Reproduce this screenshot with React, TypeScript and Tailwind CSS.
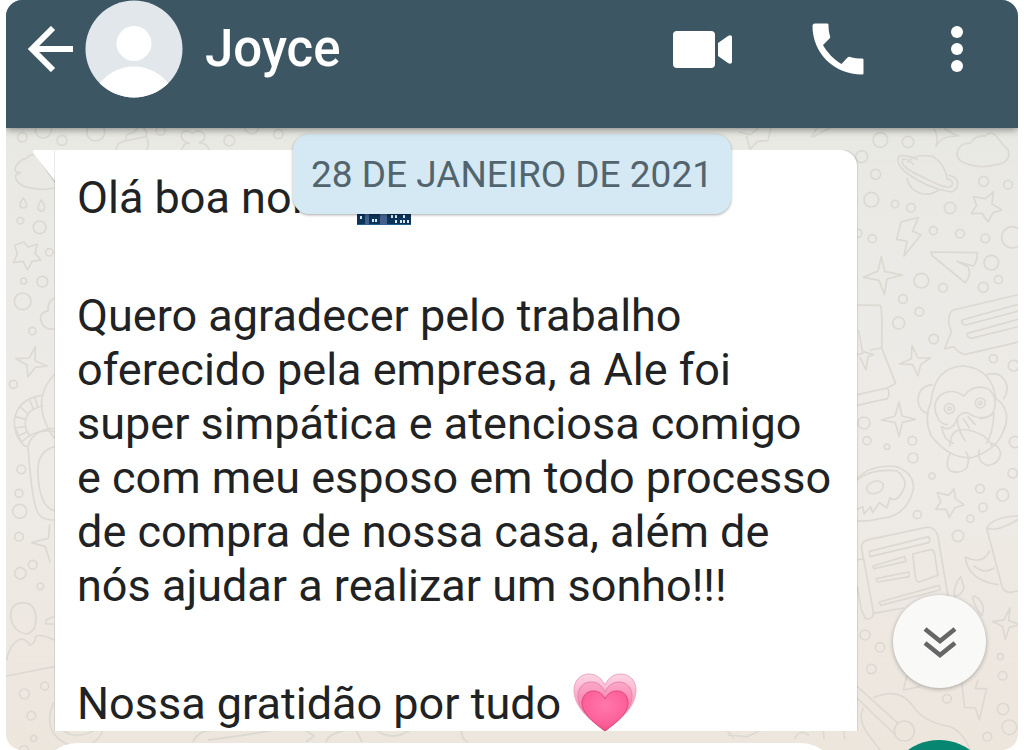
import type { ReactNode } from "react";

type Circle = [number, number, number];

const rightDots: Circle[] = [
  [91, 60, 22], [174, 66, 17], [35, 110, 18], [77, 163, 15], [64, 239, 22], [135, 252, 11],
  [183, 263, 13], [300, 264, 17], [401, 184, 15], [474, 194, 13], [250, 332, 12], [330, 341, 13],
  [67, 356, 12], [406, 355, 13], [487, 352, 32], [424, 428, 22], [445, 479, 12], [400, 502, 15],
  [214, 482, 22], [279, 503, 13], [159, 537, 13], [208, 575, 13], [146, 609, 18], [251, 657, 14],
  [430, 716, 12], [491, 737, 16], [42, 909, 18], [51, 962, 12], [111, 980, 8], [187, 962, 13],
  [189, 1014, 15], [495, 966, 17], [246, 1068, 9], [488, 1060, 14], [390, 1106, 13], [458, 1125, 18],
  [399, 1162, 13], [361, 1196, 11], [202, 1184, 12], [324, 1248, 17], [45, 1545, 15], [90, 1582, 14],
  [64, 1647, 14], [451, 1610, 9], [458, 1667, 13], [291, 1736, 13], [459, 1767, 17], [478, 1822, 22],
  [412, 1850, 13], [24, 340, 12],
];

const leftDots: Circle[] = [
  [67, 52, 14], [130, 30, 24], [186, 61, 15], [287, 36, 27], [482, 32, 13], [688, 62, 16],
  [755, 20, 21], [835, 42, 14], [61, 302, 10], [119, 322, 19], [148, 397, 11], [71, 483, 9],
  [127, 485, 16], [68, 544, 25], [97, 633, 11], [40, 793, 12], [64, 1048, 13], [57, 1120, 12],
  [59, 1174, 21], [57, 1250, 13], [98, 1334, 13], [61, 1360, 17], [121, 1399, 10], [73, 1722, 15],
  [134, 1698, 12], [94, 1787, 13], [101, 1855, 9], [72, 1890, 13],
];

function Doodles({ dots, children }: { dots: Circle[]; children: ReactNode }) {
  return (
    <g
      transform="scale(.33333)"
      fill="none"
      stroke="#dcd9d3"
      strokeWidth="5"
      strokeLinejoin="round"
      strokeLinecap="round"
    >
      {dots.map(([x, y, r]) => (
        <circle key={`${x}-${y}`} cx={x} cy={y} r={r} />
      ))}
      {children}
    </g>
  );
}

function Wallpaper() {
  return (
    <div className="absolute inset-0 overflow-hidden bg-linear-to-b from-[#e9e9e4] via-[#eeebe7] via-50% to-[#ede6dd]" aria-hidden="true">
      <svg className="absolute top-0 left-0" width="294" height="622" viewBox="6 8 294 622">
        <Doodles dots={leftDots}>
          <path d="M62 158 Q38 158 48 138 Q62 116 78 116 Q100 92 120 116 Q134 138 162 150 M162 204 Q128 212 98 205 Q54 200 46 172 Q46 162 62 158" />
          <path d="M70 234 Q50 262 70 264 Q90 262 70 234 M124 240 Q104 270 124 274 Q144 268 124 240" />
          <path d="M72 366 L85 382 L112 372 L105 400 L123 420 L96 424 L83 450 L69 424 L40 428 L52 402 L44 376 Z" />
          <path d="M162 535 Q140 548 145 572 Q114 580 124 605 Q132 630 162 627" />
          <path d="M106 680 L105 722 L142 738 L106 742 L84 771 L81 735 L48 716 L88 714 Z" />
          <path d="M162 765 Q110 820 130 890 Q144 932 162 952 M124 826 Q52 838 43 900 Q42 946 66 968 M128 858 Q78 868 76 908 Q76 938 90 944 M88 838 L100 866 M62 862 L84 882 M46 890 L76 898 M46 924 L78 920 M104 830 L113 860 M54 948 L84 934" />
          <path d="M66 965 Q105 925 162 935 M50 930 Q62 980 84 980 Q96 930 160 925 M84 980 Q96 1160 118 1185 Q132 1200 162 1200 M162 980 Q110 996 114 1060 Q118 1160 162 1172" />
          <path d="M149 1215 L145 1255 L95 1268 L136 1280 L150 1325" />
          <path d="M70 1448 Q32 1448 32 1488 Q36 1534 80 1542 Q108 1536 108 1495 Q106 1450 70 1448 M160 1490 L138 1500 L138 1512 L160 1512" />
          <path d="M20 1668 L162 1640 M20 1620 Q30 1570 60 1558 Q76 1555 90 1576 Q108 1568 106 1550 Q120 1540 162 1560" />
          <path d="M160 1750 Q138 1800 160 1840 Q200 1890 260 1876 Q300 1865 310 1825 M168 1810 Q210 1870 285 1830" />
          <path d="M350 90 Q345 68 380 62 Q370 42 400 38 Q418 24 408 16 Q446 24 438 48 Q450 70 440 90 M380 62 L438 50" />
          <path d="M545 90 Q552 66 568 70 Q536 58 546 38 Q560 26 578 40 Q594 24 612 42 Q620 62 598 68 Q622 70 628 90" />
        </Doodles>
      </svg>
      <svg className="absolute top-0 right-0" width="298" height="622" viewBox="-130 8 298 622">
        <Doodles dots={rightDots}>
          <path d="M-332 36 L-300 44 L-276 26 M-238 26 L-246 62 L-278 64 L-300 88 L-310 50 M-115 50 L-98 22 M-110 50 L-60 24" />
          <path d="M252 28 Q266 44 258 80 Q272 46 325 48 Q292 34 285 26" />
          <path d="M358 134 Q316 122 322 96 Q330 68 360 70 Q376 44 406 48 Q424 28 442 52 Q460 78 474 88 Q486 128 438 134 Q396 146 358 134 Z" />
          <path d="M174 126 Q196 98 250 110 Q288 136 292 180 M264 212 Q228 232 198 214 Q174 198 172 176 M148 108 Q134 126 166 156 Q230 206 306 216 Q328 204 322 182 Q316 170 298 166 M148 108 Q168 104 202 118 M158 118 Q146 140 220 172 Q280 206 304 200 Q314 184 294 176 M158 118 Q178 116 190 134" />
          <path d="M430 216 L426 252 L456 270 L429 278 L414 306 L396 280 L364 280 L380 256 L370 230 L406 236 Z" />
          <path d="M153 306 L205 292 L188 334 L213 344 L162 408 L171 364 L140 358 Z" />
          <path d="M242 396 L382 398 Q380 430 370 438 L320 424 L354 440 Q366 466 345 488 L248 408 Z" />
          <path d="M94 410 L104 454 L157 465 L111 477 L103 523 L87 481 L41 472 L84 453 Z" />
          <path d="M22 555 L90 556 Q98 566 95 684 L137 790 L112 804 L22 824 M112 804 Q122 820 112 836 L22 856 M26 632 L38 700 L22 704 M38 694 L70 704 L54 710 L48 750 L30 712 M62 690 L95 684" />
          <path d="M505 524 L310 570 Q295 576 296 610 L304 636 L284 686 L312 680 Q326 700 346 703 L505 666 M505 553 L336 600 Q332 612 348 615 L505 573 M505 598 L352 640 Q350 652 364 655 L505 620" />
          <path d="M186 676 L204 714 L241 714 L212 734 L204 768 L188 734 L149 732 L184 716 Z" />
          <path d="M147 846 L156 888 L196 898 L157 907 L147 950 L136 908 L94 900 L135 888 Z" />
          <path d="M243 846 Q252 742 340 738 Q424 744 438 836 Q486 870 462 930 M246 794 Q206 800 204 840 Q206 874 236 882 M410 764 Q448 752 466 784 Q480 812 460 836 M341 828 Q372 790 414 806 Q444 830 432 870 Q424 894 392 896 M341 828 Q306 802 270 826 Q244 854 262 890 Q270 912 292 914 M243 846 Q220 898 244 948 Q300 1020 370 1012 Q450 984 464 920" />
          <path d="M275 920 Q305 940 322 894 Q338 872 356 880 Q394 906 432 880 M322 894 Q322 930 346 962 M340 896 L358 924 M354 890 L376 914 M432 880 Q430 934 410 970 M275 920 Q280 960 310 970" />
          <circle cx="298" cy="866" r="15" /><circle cx="391" cy="849" r="15" />
          <circle cx="298" cy="866" r="5" /><circle cx="391" cy="849" r="5" />
          <path d="M300 978 Q300 920 352 930 Q408 940 426 978 M300 1000 Q282 1042 304 1054 Q330 1062 350 1044 Q362 1014 348 996 M388 990 Q380 1026 412 1036 Q446 1034 452 1002 Q448 978 426 970" />
          <path d="M22 1075 Q64 1032 140 1040 Q194 1060 190 1108 Q170 1190 90 1196 Q52 1206 22 1202 M22 1080 Q60 1046 140 1052 Q176 1080 160 1110 Q140 1150 120 1134 L110 1164 L88 1148 L68 1178 L62 1160 L42 1182 L38 1160 L22 1168" />
          <ellipse cx="75" cy="1102" rx="26" ry="18" transform="rotate(-20 75 1102)" />
          <path d="M312 1106 L316 1136 L342 1154 L314 1164 L298 1192 L288 1168 L257 1168 L272 1146 L262 1118 L296 1126 Z" />
          <path d="M34 1280 Q36 1262 60 1258 L230 1222 Q256 1220 264 1250 L294 1430 M34 1280 L70 1475 Q72 1500 46 1496 L34 1470 L22 1400 M22 1320 L40 1316 M70 1480 L160 1464 M58 1294 L236 1250 Q242 1260 236 1268 L60 1310 Z M68 1338 L164 1310 L168 1324 L72 1346 Z M78 1376 L176 1356 L178 1370 L82 1386 Z M88 1446 L268 1396 L270 1410 L92 1456 Z M188 1302 L244 1288 Q252 1290 254 1302 L264 1366 L208 1386 Q198 1386 196 1370 Z" />
          <path d="M410 1224 Q430 1190 505 1188 M410 1224 Q440 1238 505 1198 M410 1224 L456 1400 Q464 1418 482 1417 L505 1412 M418 1294 Q398 1336 346 1312 Q354 1380 444 1394 M432 1344 Q404 1364 372 1338" />
          <path d="M332 1370 Q308 1400 314 1430 Q338 1426 342 1400 Z M368 1430 Q372 1460 396 1486 Q410 1450 374 1428" />
          <path d="M480 1464 L476 1502 L512 1514 L478 1522 L466 1558 L458 1520 L428 1504 L462 1500 Z" />
          <path d="M334 1680 L344 1762 L376 1764 L388 1800 L410 1706 L376 1706 L384 1680 M170 1670 L160 1710 L210 1700" />
          <path d="M22 1700 L142 1808 M22 1735 L136 1845 M72 1732 Q150 1700 190 1760 Q220 1806 300 1820 Q340 1835 360 1890 M40 1765 Q20 1800 60 1850 L90 1890" />
          <circle cx="163" cy="1833" r="30" />
          <path d="M-365 1845 L-310 1850 L-270 1832 M-165 1855 Q-150 1825 -125 1845 M-80 1832 L-78 1855 M-20 1832 L-16 1856 M-370 1832 Q-355 1842 -350 1855" />
        </Doodles>
      </svg>
      <svg className="absolute bottom-0 left-[186px]" width="500" height="22" viewBox="192 728 500 22" fill="none" stroke="#dcd9d3" strokeWidth="2">
        <path d="M193 742 Q198 730 215 730 M208 740 Q240 736 275 730 M305 730 L314 736 L306 742 M326 742 Q328 734 346 730 M356 730 L362 742 M376 730 Q392 742 410 730 M462 730 Q460 738 468 742" />
      </svg>
    </div>
  );
}

function NightCity() {
  return (
    <svg className="ml-4 size-[54px]" viewBox="0 0 54 54" role="img" aria-label="noite">
      <path fill="#1f5f8d" d="M0 0h54v54H0z" />
      <path fill="#0c3358" d="M0 24h8v-8h12v14h8V12h12v10h14v31H0z" />
      <path fill="#43608c" d="M8 40h4v14H8zM23 40h7v14h-7z" />
      <path fill="#d9e7f1" d="M3 45h2v3H3zM15 48h2v3h-2zM18 48h2v3h-2zM34 44h2v3h-2zM38 44h2v3h-2zM38 49h2v3h-2zM43 49h2v3h-2zM46 44h2v3h-2zM46 49h2v3h-2zM50 49h2v3h-2z" />
    </svg>
  );
}

function Heart() {
  return (
    <svg className="ml-3 h-[58px] w-16 shrink-0" viewBox="0 0 64 58" role="img" aria-label="coração">
      <defs>
        <linearGradient id="outer" x1="0" y1="0" x2="0" y2="1">
          <stop offset="0" stopColor="#fbd5e3" />
          <stop offset="1" stopColor="#fb6fa3" />
        </linearGradient>
        <linearGradient id="middle" x1="0" y1="0" x2="0" y2="1">
          <stop offset="0" stopColor="#fba9c8" />
          <stop offset="1" stopColor="#f95a94" />
        </linearGradient>
        <radialGradient id="inner" cx=".5" cy=".35" r=".75">
          <stop offset="0" stopColor="#ff78ad" />
          <stop offset=".6" stopColor="#fd6199" />
          <stop offset="1" stopColor="#e8447c" />
        </radialGradient>
      </defs>
      <path fill="url(#outer)" stroke="#eda6c0" strokeWidth="1" d="M32 12C36 3 43 1 48 1c9 0 15 7 15 16 0 16-14 29-31 41C15 46 1 33 1 17 1 8 7 1 16 1c6 0 12 3 16 11z" />
      <path fill="url(#middle)" stroke="#e884a9" strokeWidth="1" d="M32 19c3-7 9-10 14-10 8 0 13 6 13 14 0 13-12 23-27 35C17 46 5 36 5 23 5 15 10 9 18 9c6 0 11 3 14 10z" />
      <path fill="url(#inner)" stroke="#dc4b7f" strokeWidth="1" d="M32 26c3-6 7-8 12-8 7 0 11 5 11 12 0 10-10 18-23 28C19 48 9 40 9 30c0-7 5-12 11-12 6 0 10 3 12 8z" />
    </svg>
  );
}

function Header() {
  return (
    <header className="relative z-20 flex h-32 shrink-0 items-start bg-[#3c5663] pr-[54px] pl-[22px] text-white shadow-[0_1px_8px_rgba(0,0,0,0.5)]">
      <button type="button" aria-label="Voltar" className="flex h-[98px] w-[57px] items-center">
        <svg width="46" height="46" viewBox="0 0 46 46" fill="none" stroke="currentColor" strokeWidth="6">
          <path d="M25 2 4 23l21 21M4 23h41" />
        </svg>
      </button>
      <svg className="size-[98px]" viewBox="0 0 98 98" aria-hidden="true">
        <defs>
          <clipPath id="avatar"><circle cx="49" cy="49" r="48.5" /></clipPath>
        </defs>
        <g clipPath="url(#avatar)">
          <path fill="#e1e7ea" d="M0 0h98v98H0z" />
          <circle cx="49" cy="43.500" r="17.500" fill="#fff" />
          <path fill="#fff" d="M14 84c8-10 20-17.500 35-17.500S76 74 84 84v14H14z" />
        </g>
      </svg>
      <h1 className="ml-[22px] flex h-[98px] flex-1 items-center text-[51px] font-medium">Joyce</h1>
      <div className="flex h-[98px] items-center">
        <button type="button" aria-label="Chamada de vídeo">
          <svg width="60" height="38" viewBox="0 0 60 38" fill="currentColor">
            <rect x="0" y="1" width="42" height="37" rx="4" />
            <path d="M45 13 55 6c2-1.300 4-.8 4 1.500v24c0 2.300-2 2.800-4 1.500L45 26z" />
          </svg>
        </button>
        <button type="button" aria-label="Chamada de voz" className="ml-[79px]">
          <svg width="52" height="52" viewBox="0 0 52 52" fill="currentColor">
            <path d="M3 .5h12c1 0 1.500.5 1.500 1.500 0 4 .5 8 1.500 11 .4 1 .2 1.800-.5 2.500L11 22c4 7.500 11 14.500 18.500 19l6-6.500c.8-.8 1.600-1 2.600-.6C42 35 46 35.500 50 35.500c1 0 1.500.5 1.500 1.500v13c0 1-.5 1.500-1.500 1.500C22 51.500.5 30 .5 3 .5 1.500 1.500.5 3 .5z" />
          </svg>
        </button>
        <button type="button" aria-label="Mais opções" className="ml-[86px]">
          <svg width="14" height="48" viewBox="0 0 14 48" fill="currentColor">
            <circle cx="7" cy="7" r="6" />
            <circle cx="7" cy="24" r="6" />
            <circle cx="7" cy="41" r="6" />
          </svg>
        </button>
      </div>
    </header>
  );
}

export default function App() {
  return (
    <div className="min-h-screen bg-white px-1.5 font-['Roboto','Noto_Sans',sans-serif]">
      <div className="flex h-screen flex-col overflow-hidden rounded-2xl">
        <Header />
        <main className="relative flex-1 overflow-hidden">
          <Wallpaper />
          <div className="absolute top-1.5 left-1/2 z-10 -translate-x-1/2 rounded-2xl bg-[#d4e9f4] px-[18px] pt-[17px] pb-[15px] text-[37px] leading-12 whitespace-nowrap text-[#52646d] shadow-[0_1px_3px_rgba(0,0,0,0.35)]">
            28 DE JANEIRO DE 2021
          </div>
          <div className="relative flex flex-col gap-3 pt-[22px] pr-[161px] pl-[27px]">
            <article className="flex">
              <svg className="shrink-0" width="22" height="34" viewBox="0 0 22 34" aria-hidden="true">
                <path fill="#bfc0bb" d="M0 2 22 33V24z" />
                <path fill="#fff" d="M2 0h20v31L0 3Q-1 0 2 0z" />
              </svg>
              <div className="flex-1 space-y-16 rounded-tr-2xl bg-white pt-[21px] pl-[22px] text-[45px] leading-[54px] text-[#212223] shadow-[0_0_2px_rgba(0,0,0,0.35)] [clip-path:inset(0_-3px_0_-1px)]">
                <p className="flex items-end">Olá boa noite<NightCity /></p>
                <p>
                  Quero agradecer pelo trabalho<br />
                  oferecido pela empresa, a Ale foi<br />
                  super simpática e atenciosa comigo<br />
                  e com meu esposo em todo processo<br />
                  de compra de nossa casa, além de<br />
                  nós ajudar a realizar um sonho!!!
                </p>
                <p className="flex h-[54px] items-end">Nossa gratidão por tudo<Heart /></p>
              </div>
            </article>
            <div className="mr-5 ml-2 h-20 rounded-[36px] bg-white" />
          </div>
          <button
            type="button"
            aria-label="Ir para o fim"
            className="absolute right-8 bottom-[62px] flex size-[93px] items-center justify-center rounded-full bg-[#f9f9f8] shadow-[0_1px_4px_rgba(0,0,0,0.3)]"
          >
            <svg width="36" height="34" viewBox="0 0 36 34" fill="none" stroke="#666" strokeWidth="4.500">
              <path d="M3 4 18 16 33 4M3 18l15 12 15-12" />
            </svg>
          </button>
          <button
            type="button"
            aria-label="Mensagem de voz"
            className="absolute right-[26px] -bottom-24 size-[106px] rounded-full bg-[#078672]"
          />
        </main>
      </div>
    </div>
  );
}
